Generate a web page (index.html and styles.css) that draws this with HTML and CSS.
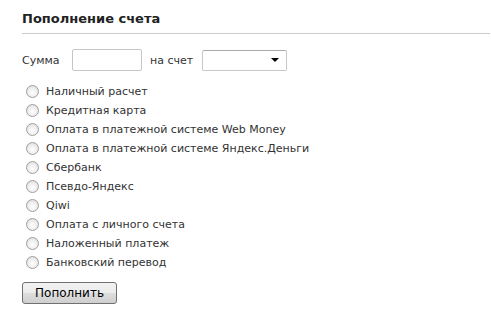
FILE: index.html
```html
<!DOCTYPE html>
<html lang="ru">
<head>
<meta charset="utf-8">
<title>Пополнение счета</title>
<link rel="stylesheet" href="styles.css">
</head>
<body>
<div class="page">
  <h2 class="title">Пополнение счета</h2>
  <form class="form">
    <div class="sum-row">
      <label class="lbl lbl-sum" for="sum">Сумма</label>
      <input class="sum-input" id="sum" type="text">
      <label class="lbl lbl-acc" for="acc">на счет</label>
      <div class="select" id="acc">
        <span class="select-arrow"></span>
      </div>
    </div>
    <ul class="methods">
      <li class="method"><span class="radio"></span><span>Наличный расчет</span></li>
      <li class="method"><span class="radio"></span><span>Кредитная карта</span></li>
      <li class="method"><span class="radio"></span><span>Оплата в платежной системе Web Money</span></li>
      <li class="method"><span class="radio"></span><span>Оплата в платежной системе Яндекс.Деньги</span></li>
      <li class="method"><span class="radio"></span><span>Сбербанк</span></li>
      <li class="method"><span class="radio"></span><span>Псевдо-Яндекс</span></li>
      <li class="method"><span class="radio"></span><span>Qiwi</span></li>
      <li class="method"><span class="radio"></span><span>Оплата с личного счета</span></li>
      <li class="method"><span class="radio"></span><span>Наложенный платеж</span></li>
      <li class="method"><span class="radio"></span><span>Банковский перевод</span></li>
    </ul>
    <button class="submit" type="button">Пополнить</button>
  </form>
</div>
</body>
</html>
```
FILE: styles.css
```css
html, body {
  margin: 0;
  padding: 0;
  background: #fff;
}
body {
  font-family: "DejaVu Sans", Verdana, sans-serif;
  font-size: 11px;
  color: #333;
}
.page {
  padding: 10px 1px 0 22px;
}
.title {
  margin: 0;
  font-size: 13px;
  font-weight: bold;
  color: #222;
  line-height: 18px;
  padding-bottom: 5px;
  border-bottom: 1px solid #ccc;
}
.form {
  margin: 0;
}
.sum-row {
  display: flex;
  align-items: center;
  margin-top: 15px;
  height: 22px;
}
.lbl {
  color: #333;
}
.lbl-sum {
  width: 50px;
}
.lbl-acc {
  width: 52px;
}
.sum-input {
  box-sizing: border-box;
  width: 70px;
  height: 22px;
  margin: 0 8px 0 0;
  border: 1px solid #c6c6c6;
  border-radius: 2px;
  padding: 0;
  background: #fff;
}
.select {
  box-sizing: border-box;
  width: 85px;
  height: 21px;
  border: 1px solid #c8c8c8;
  border-top-color: #aaa;
  border-radius: 2px;
  display: flex;
  align-items: center;
  justify-content: flex-end;
  padding-right: 7px;
}
.select-arrow {
  width: 0;
  height: 0;
  border-left: 4px solid transparent;
  border-right: 4px solid transparent;
  border-top: 4px solid #000;
}
.methods {
  list-style: none;
  margin: 11px 0 0 0;
  padding: 0;
}
.method {
  display: flex;
  align-items: center;
  height: 19px;
}
.radio {
  box-sizing: border-box;
  width: 13px;
  height: 13px;
  margin: 0 7px 0 4px;
  border-radius: 50%;
  border: 1px solid #a0a0a0;
  background: radial-gradient(circle at 50% 60%, #ffffff 0%, #f0f0f0 45%, #d6d6d6 100%);
}
.submit {
  margin-top: 10px;
  box-sizing: border-box;
  width: 95px;
  height: 22px;
  padding: 0;
  font-family: inherit;
  font-size: 12px;
  color: #000;
  border: 1px solid #707070;
  border-radius: 3px;
  background: linear-gradient(#f2f2f2 0%, #ebebeb 50%, #dddddd 51%, #cfcfcf 100%);
}
```
